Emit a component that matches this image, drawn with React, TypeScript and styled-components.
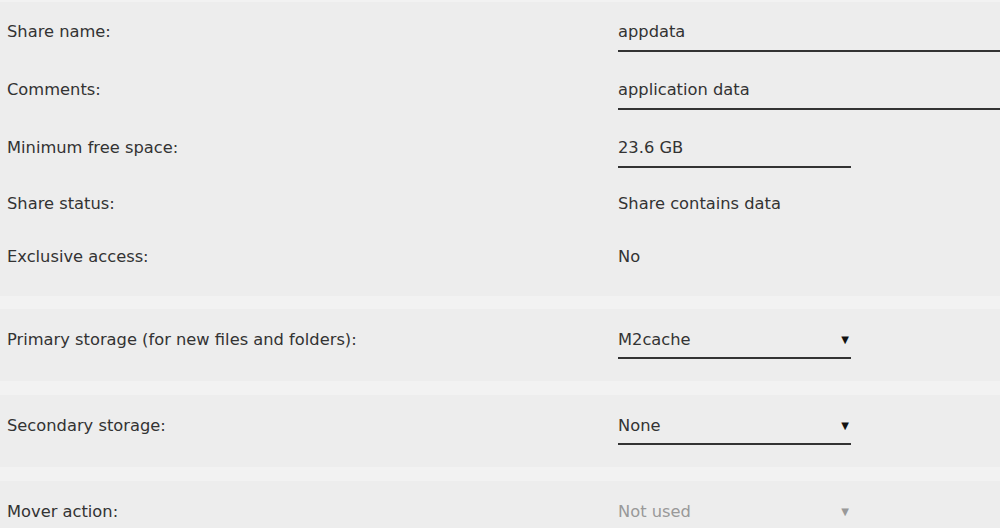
import React from "react";
import styled, { createGlobalStyle } from "styled-components";

const GlobalStyle = createGlobalStyle`
  html, body {
    margin: 0;
    padding: 0;
    background: #f2f2f2;
    overflow: hidden;
  }
  body {
    font-family: "DejaVu Sans", "Open Sans", sans-serif;
    font-size: 16.3px;
    color: #333;
  }
`;

const Page = styled.div`
  width: 1000px;
  padding-top: 2px;
`;

const Panel = styled.section<{ $gap?: number; $pad?: number }>`
  background: #ededed;
  margin-bottom: ${({ $gap }) => $gap ?? 14}px;
  padding-bottom: ${({ $pad }) => $pad ?? 0}px;
`;

const Row = styled.div<{ $h: number; $top: number }>`
  display: grid;
  grid-template-columns: 618px 1fr;
  align-items: start;
  height: ${({ $h }) => $h}px;
  padding-top: ${({ $top }) => $top}px;
  box-sizing: border-box;
`;

const Label = styled.div`
  padding-left: 7px;
  line-height: 20px;
  white-space: nowrap;
`;

const Value = styled.div`
  line-height: 20px;
  white-space: nowrap;
`;

const Field = styled.div<{ $wide?: boolean }>`
  width: ${({ $wide }) => ($wide ? "420px" : "233px")};
  line-height: 20px;
  padding-bottom: 8px;
  border-bottom: 2px solid #333;
  white-space: nowrap;
`;

const Select = styled.div<{ $disabled?: boolean }>`
  display: flex;
  justify-content: space-between;
  align-items: center;
  width: 233px;
  line-height: 20px;
  padding-bottom: 7px;
  border-bottom: 2px solid ${({ $disabled }) => ($disabled ? "transparent" : "#333")};
  color: ${({ $disabled }) => ($disabled ? "#999" : "#333")};
  white-space: nowrap;
`;

const Caret = styled.span<{ $disabled?: boolean }>`
  font-size: 10px;
  line-height: 20px;
  padding-right: 2px;
  color: ${({ $disabled }) => ($disabled ? "#999" : "#111")};
`;

const inputs = [
  { label: "Share name:", value: "appdata", wide: true },
  { label: "Comments:", value: "application data", wide: true },
  { label: "Minimum free space:", value: "23.6 GB", wide: false },
];

const statics = [
  { label: "Share status:", value: "Share contains data" },
  { label: "Exclusive access:", value: "No" },
];

const selects = [
  { label: "Primary storage (for new files and folders):", value: "M2cache" },
  { label: "Secondary storage:", value: "None" },
  { label: "Mover action:", value: "Not used", disabled: true },
];

export default function App() {
  return (
    <Page>
      <GlobalStyle />
      <Panel $gap={13} $pad={14}>
        {inputs.map((r) => (
          <Row key={r.label} $h={58} $top={20}>
            <Label>{r.label}</Label>
            <Field $wide={r.wide}>{r.value}</Field>
          </Row>
        ))}
        {statics.map((r) => (
          <Row key={r.label} $h={53} $top={18}>
            <Label>{r.label}</Label>
            <Value>{r.value}</Value>
          </Row>
        ))}
      </Panel>
      {selects.map((r) => (
        <Panel key={r.label}>
          <Row $h={72} $top={21}>
            <Label>{r.label}</Label>
            <Select $disabled={r.disabled}>
              <span>{r.value}</span>
              <Caret $disabled={r.disabled}>▼</Caret>
            </Select>
          </Row>
        </Panel>
      ))}
    </Page>
  );
}
